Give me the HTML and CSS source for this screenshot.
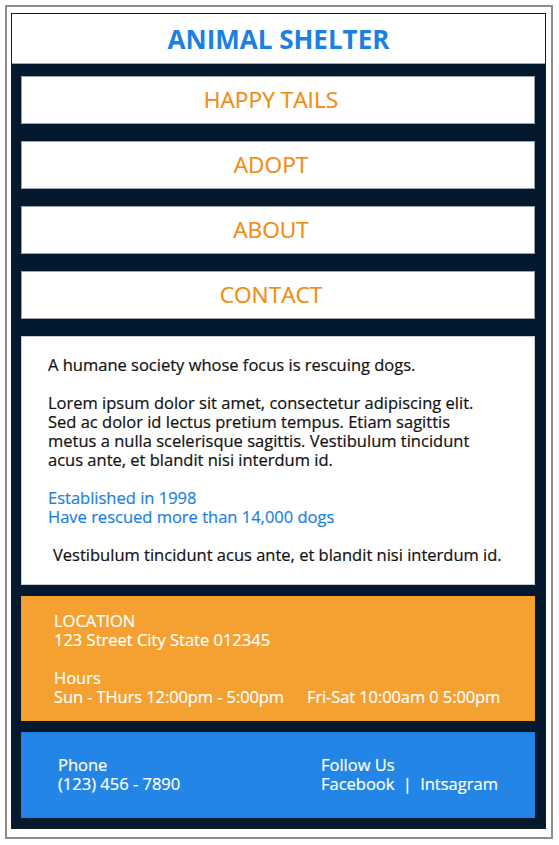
FILE: index.html
```html
<!DOCTYPE html>
<html>
<head>
<meta charset="utf-8">
<link rel="stylesheet" href="styles.css">
</head>
<body>
<div class="page">
  <div class="frame">
    <header class="header"><h1 class="title">ANIMAL SHELTER</h1></header>
    <div class="body">
      <nav class="nav">
        <a class="nav-item">HAPPY TAILS</a>
        <a class="nav-item">ADOPT</a>
        <a class="nav-item">ABOUT</a>
        <a class="nav-item">CONTACT</a>
      </nav>
      <section class="content">
        <p class="para">A humane society whose focus is rescuing dogs.</p>
        <p class="para">Lorem ipsum dolor sit amet, consectetur adipiscing elit. Sed ac dolor id lectus pretium tempus. Etiam sagittis metus a nulla scelerisque sagittis. Vestibulum tincidunt acus ante, et blandit nisi interdum id.</p>
        <p class="para facts">Established in 1998<br>Have rescued more than 14,000 dogs</p>
        <p class="para indent">Vestibulum tincidunt acus ante, et blandit nisi interdum id.</p>
      </section>
      <section class="info">
        <p class="para">LOCATION<br>123 Street City State 012345</p>
        <div class="para">
          <div>Hours</div>
          <div class="hours"><span>Sun - THurs 12:00pm - 5:00pm</span><span>Fri-Sat 10:00am 0 5:00pm</span></div>
        </div>
      </section>
      <footer class="contact">
        <div class="col">Phone<br>(123) 456 - 7890</div>
        <div class="col">Follow Us<br>Facebook <span class="sep">|</span> Intsagram</div>
      </footer>
    </div>
  </div>
</div>
</body>
</html>
```
FILE: styles.css
```css
* { box-sizing: border-box; }
html, body { margin: 0; padding: 0; background: #fff; }
body {
  font-family: "Open Sans", "Liberation Sans", sans-serif;
  font-size: 16.5px;
  font-weight: 400;
  line-height: 19px;
  -webkit-text-stroke: 0.2px currentColor;
}
.page {
  margin: 5px;
  width: 548px;
  height: 834px;
  border: 2px solid #8c8c8c;
  padding: 6px 5px 8px 4px;
}
.frame {
  height: 100%;
  background: #05192e;
  border: 1px solid #1b1b1b;
  display: flex;
  flex-direction: column;
}
.header {
  background: #fff;
  height: 50px;
  border-bottom: 1px solid #a8a8a8;
  display: flex;
  align-items: center;
  justify-content: center;
}
.title {
  margin: 0;
  font-size: 26px;
  font-weight: 700;
  color: #1b80e3;
  line-height: 30px;
  -webkit-text-stroke: 0;
}
.body {
  padding: 12px 10px 10px 9px;
  display: flex;
  flex-direction: column;
}
.nav {
  display: flex;
  flex-direction: column;
  gap: 17px;
}
.nav-item {
  height: 48px;
  background: #fff;
  border: 1px solid #9aa3ad;
  display: flex;
  align-items: center;
  justify-content: center;
  padding-right: 14px;
  padding-bottom: 1px;
  color: #f28c10;
  font-size: 22.7px;
  line-height: 24px;
}
.content {
  margin-top: 17px;
  height: 249px;
  background: #fff;
  padding: 18px 46px 0 26px;
  color: #111;
  border: 1px solid #c8ccd0;
}
.para { margin: 0 0 19px 0; }
.para:last-child { margin-bottom: 0; }
.facts { color: #1c7fe2; }
.indent { padding-left: 5px; white-space: nowrap; }
.info {
  margin-top: 11px;
  height: 125px;
  background: #f5a131;
  border: 1px solid #f39c20;
  padding: 14px 10px 0 32px;
  color: #fff;
}
.hours { display: flex; gap: 23px; white-space: nowrap; letter-spacing: -0.1px; }
.contact {
  margin-top: 11px;
  height: 86px;
  background: #2386e6;
  border: 1px solid #1c7ddc;
  padding: 22px 10px 0 36px;
  color: #fff;
  display: grid;
  grid-template-columns: 263px 1fr;
}
.sep { margin: 0 4px; }
```
